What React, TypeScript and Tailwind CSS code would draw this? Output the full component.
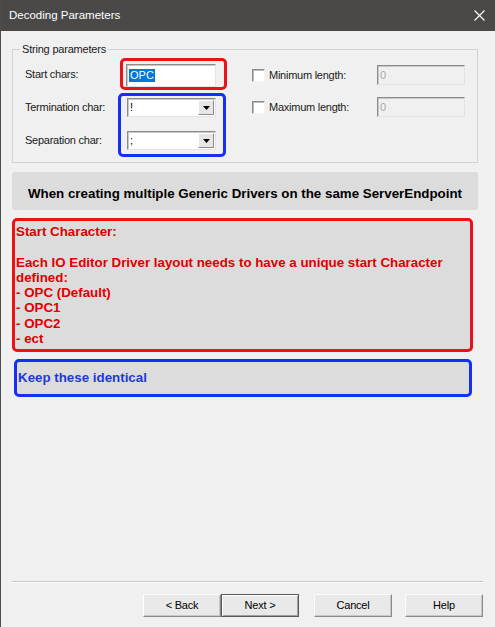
import React from "react";

// Classic sunken edit/select frame used throughout the dialog
const sunken =
  "border border-t-[#8c8c8c] border-l-[#8c8c8c] border-r-[#e3e3e3] border-b-[#e3e3e3] shadow-[inset_1px_1px_0_#c8c8c8]";

function DropDown({ value }: { value: string }) {
  return (
    <div className={`w-[89px] h-[19px] bg-white flex items-center ${sunken}`}>
      <span className="flex-1 pl-[2px] text-[11px] leading-none text-black">{value}</span>
      <div className="w-[16px] h-[15px] mr-[1px] bg-[#e6e6e6] border border-t-white border-l-white border-r-[#8c8c8c] border-b-[#8c8c8c] flex items-center justify-center">
        <svg width="7" height="4" viewBox="0 0 7 4">
          <path d="M0 0h7L3.5 4z" fill="#000" />
        </svg>
      </div>
    </div>
  );
}

function CheckRow({ label }: { label: string }) {
  return (
    <div className="flex items-center h-[20px]">
      <div className="w-[13px] h-[13px] bg-white border border-t-[#8c8c8c] border-l-[#8c8c8c] border-r-[#f4f4f4] border-b-[#f4f4f4] shadow-[inset_1px_1px_0_#b8b8b8]" />
      <span className="ml-[4px] text-[11px] tracking-[-0.25px] text-[#1a1a1a]">{label}</span>
      <div className={`ml-auto w-[88px] h-[20px] bg-[#f0f0f0] flex items-center ${sunken}`}>
        <span className="pl-[2px] text-[11px] text-[#a8a8a8]">0</span>
      </div>
    </div>
  );
}

function DialogButton({ label, primary = false }: { label: string; primary?: boolean }) {
  return (
    <button
      className={`w-[78px] h-[23px] bg-[#e9e9e9] text-[11px] tracking-[-0.2px] text-black flex items-center justify-center border ${
        primary
          ? "border-[#5a5a5a] shadow-[inset_1px_1px_0_#fff,inset_-1px_-1px_0_#a0a0a0]"
          : "border-t-[#fdfdfd] border-l-[#fdfdfd] border-r-[#8a8a8a] border-b-[#8a8a8a] shadow-[inset_-1px_-1px_0_#c8c8c8]"
      }`}
    >
      {label}
    </button>
  );
}

export default function App() {
  return (
    <div className="w-[495px] h-[627px] flex flex-col bg-[#f0f0f0] border-l border-[#4e4d4c] font-['Liberation_Sans',Arial,sans-serif] overflow-hidden">
      {/* Title bar */}
      <div className="h-[31px] shrink-0 bg-[#4a4948] flex items-center justify-between pl-[8px] pr-[10px]">
        <span className="text-[11.5px] text-white">Decoding Parameters</span>
        <svg width="11" height="11" viewBox="0 0 11 11">
          <path d="M0.5 0.5l10 10M10.5 0.5l-10 10" stroke="#fff" strokeWidth="1.1" />
        </svg>
      </div>

      <div className="flex-1 flex flex-col pl-[11px] pr-[12px]">
        {/* String parameters group */}
        <fieldset className="mt-[11px] w-[466px] border border-[#d2d2d2] pl-[12px] pb-[5px]">
          <legend className="-ml-[5px] px-[2px] text-[11px] leading-[14px] tracking-[-0.2px] text-[#1a1a1a]">
            String parameters
          </legend>
          <div className="flex">
            <div className="flex flex-col mt-[2px]">
              <div className="flex items-center">
                <span className="w-[95px] text-[11px] tracking-[-0.25px] text-[#1a1a1a]">Start chars:</span>
                <div className="w-[107px] h-[32px] border-[3px] border-[#ea1219] rounded-[5px] pl-[3px] pt-[3px]">
                  <div className={`w-[90px] h-[23px] bg-white flex items-center ${sunken}`}>
                    <span className="ml-[2px] px-[1px] bg-[#0078d7] text-[11px] leading-[13px] text-white">OPC</span>
                  </div>
                </div>
              </div>
              <div className="flex mt-[3px]">
                <div className="w-[93px] flex flex-col pt-[8px] gap-[20px] text-[11px] leading-[13px] tracking-[-0.25px] text-[#1a1a1a]">
                  <span>Termination char:</span>
                  <span>Separation char:</span>
                </div>
                <div className="w-[108px] h-[64px] border-[3px] border-[#1430f0] rounded-[5px] pl-[6px] pt-[2px] flex flex-col gap-[14px]">
                  <DropDown value="!" />
                  <DropDown value=";" />
                </div>
              </div>
            </div>
            <div className="ml-[25px] w-[213px] flex flex-col pt-[9px] gap-[12px]">
              <CheckRow label="Minimum length:" />
              <CheckRow label="Maximum length:" />
            </div>
          </div>
        </fieldset>

        {/* Notes */}
        <div className="mt-[9px] w-[466px] h-[38px] rounded-[3px] bg-[#dcdcdc] flex items-center justify-center pt-[5px]">
          <span className="text-[13.33px] font-bold text-black">
            When creating multiple Generic Drivers on the same ServerEndpoint
          </span>
        </div>

        <div className="mt-[8px] w-[461px] h-[134px] border-[3px] border-[#ea1219] rounded-[5px] bg-[#dcdcdc] pl-[1px] pt-[3px] text-[13.33px] leading-[15.25px] font-bold text-[#e00000]">
          <p>Start Character:</p>
          <p className="mt-[15.25px]">Each IO Editor Driver layout needs to have a unique start Character defined:</p>
          <p>- OPC (Default)</p>
          <p>- OPC1</p>
          <p>- OPC2</p>
          <p>- ect</p>
        </div>

        <div className="mt-[7px] ml-[2px] w-[458px] h-[38px] border-[3px] border-[#1430f0] rounded-[5px] bg-[#dcdcdc] pl-[1px] flex items-center">
          <span className="text-[13.33px] font-bold text-[#1c3ad8]">Keep these identical</span>
        </div>

        <div className="flex-1" />

        {/* Footer */}
        <div className="h-[2px] border-t border-[#c8c8c8] border-b border-b-white" />
        <div className="mt-[11px] mb-[10px] flex justify-end">
          <DialogButton label="< Back" />
          <DialogButton label="Next >" primary />
          <div className="ml-[15px]">
            <DialogButton label="Cancel" />
          </div>
          <div className="ml-[13px]">
            <DialogButton label="Help" />
          </div>
        </div>
      </div>
    </div>
  );
}
